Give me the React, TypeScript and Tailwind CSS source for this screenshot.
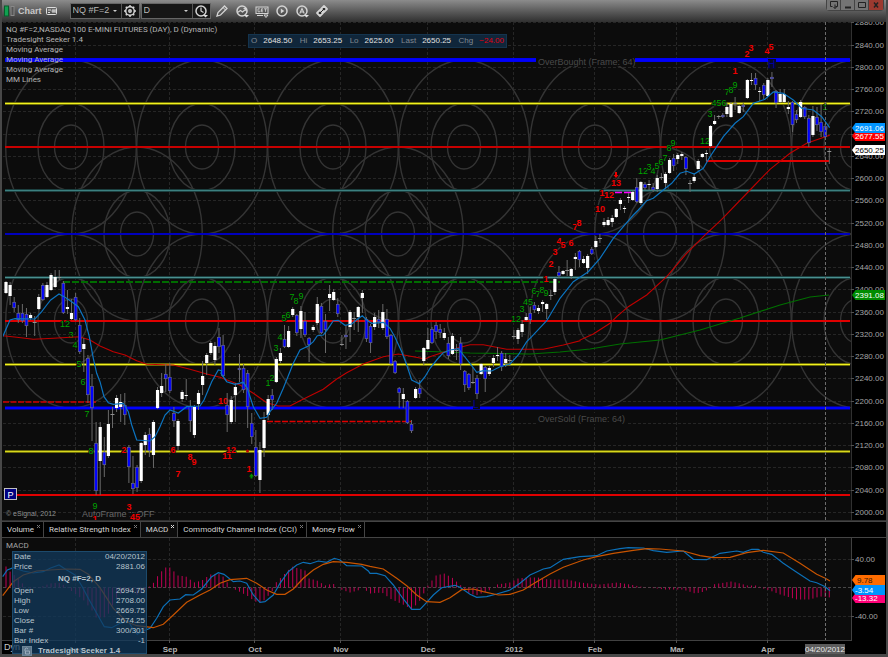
import { type ReactNode } from "react";

// One candle per entry: high, body top, body bottom, low, kind
// kind: 1 = up (white), 0 = down (blue), 2 = doji
const CANDLES: number[][] = `
281,282,293,294,1 282,285,296,305,1 297,302,308,312,0 305,313,320,323,0 304,313,321,323,0 308,314,326,337,0
313,315,318,320,1 316,322,323,336,2 294,297,309,310,1 283,285,300,301,0 282,285,297,298,1 273,275,290,291,1
270,277,287,288,1 270,277,278,280,2 281,283,313,314,0 290,307,309,314,1 299,313,319,320,1 293,297,320,321,0
318,325,352,354,0 338,344,349,372,1 355,358,395,403,0 374,386,408,441,0 422,443,491,495,0 422,427,461,495,1
437,452,465,477,0 410,424,456,458,1 407,414,415,428,2 395,398,408,412,1 394,402,407,422,1 393,405,415,425,0
445,447,467,483,0 456,483,489,494,0 465,467,488,492,0 442,443,481,483,1 432,435,445,455,1 428,434,451,457,0
420,422,455,468,1 387,390,408,409,1 373,386,393,397,1 364,374,379,392,0 363,377,391,393,0 407,413,421,427,0
419,421,446,450,1 390,392,399,402,1 379,395,396,400,1 400,406,421,432,0 405,407,435,438,1 390,393,404,410,1
361,376,385,395,1 353,355,363,375,1 341,343,353,355,1 342,346,360,365,1 328,337,347,353,0 335,345,376,377,0
393,405,415,432,0 396,400,422,424,1 383,387,395,422,1 354,368,370,382,0 364,368,390,393,0 370,373,407,428,0
413,423,437,444,0 430,447,476,477,0 442,450,480,493,1 412,420,448,457,1 395,399,415,420,1 389,395,400,410,0
357,359,382,383,1 348,353,361,363,1 325,339,347,348,0 326,331,347,348,1 307,309,315,317,1 314,315,333,336,0
306,311,329,338,1 312,321,335,337,0 337,338,345,362,0 325,327,330,332,1 297,304,323,325,1 303,306,333,334,0
314,321,330,353,0 285,294,298,311,1 289,292,300,301,1 298,304,314,317,0 335,344,345,346,2 325,335,337,349,0
310,312,327,342,1 312,318,319,330,2 306,307,317,332,1 290,293,298,313,1 317,319,339,342,0 324,326,343,353,0
313,317,327,330,1 310,319,322,328,0 304,312,328,330,1 309,319,337,339,0 334,335,364,365,0 360,361,373,374,0
387,388,393,408,0 388,394,399,408,1 400,401,423,424,0 420,424,431,433,0 387,389,398,399,1 380,388,394,398,0
347,348,361,365,1 328,340,349,350,1 327,329,343,344,0 322,325,332,339,0 324,329,333,338,0 328,333,338,340,1
337,343,356,359,0 333,336,354,355,1 344,350,351,360,2 337,343,364,370,0 370,371,385,392,0 373,374,388,390,0
367,382,383,384,2 375,378,394,399,0 363,364,374,375,1 366,367,379,392,0 366,368,374,376,1 355,358,363,367,1
347,355,356,361,1 351,353,367,371,0 353,359,363,367,1 355,360,361,366,2 330,336,337,339,2 328,330,339,344,1
320,324,332,337,1 313,317,320,321,1 307,313,320,324,0 302,305,310,313,0 305,308,311,314,1 300,302,304,312,1
303,304,309,319,1 290,295,296,300,2 278,279,292,295,1 266,272,276,278,0 270,271,274,275,1 260,270,271,276,2
268,269,276,279,1 253,257,259,270,1 250,251,260,267,0 256,259,263,264,1 254,256,268,274,1 247,249,254,255,0
236,241,247,248,1 234,238,239,243,2 218,222,225,227,1 217,220,225,226,1 215,218,222,227,1 208,209,217,218,1
198,200,204,210,1 206,208,209,213,1 193,197,198,203,1 191,192,200,201,1 178,187,202,203,0 181,182,203,205,1
182,184,188,190,0 180,184,185,190,1 183,187,190,192,0 175,178,189,192,1 173,177,178,180,2 172,174,183,189,1
158,160,173,174,1 154,158,166,171,0 153,155,159,164,1 152,154,156,160,1 156,157,169,175,0 180,183,184,192,2
173,177,181,183,1 159,161,169,169,1 153,154,157,158,1 150,153,154,161,1 125,126,146,147,1 115,121,124,125,1
115,116,117,119,2 113,115,117,118,0 103,107,114,117,1 102,104,117,118,1 97,103,104,110,2 105,106,113,114,1
103,105,107,112,0 79,80,98,99,1 73,80,81,85,1 73,78,85,90,0 87,91,92,101,1 83,85,95,99,0 78,80,96,97,1
72,77,79,87,0 90,91,103,108,0 89,94,102,103,1 89,94,102,103,1 101,107,109,114,1 101,102,125,132,0
110,114,120,123,0 100,102,117,118,1 106,107,117,119,0 115,118,143,147,0 106,116,135,137,1 107,117,125,131,0
104,122,132,137,0 124,126,137,138,0 148,151,152,164,2`
  .trim()
  .split(/\s+/)
  .map((c) => c.split(",").map(Number));

const barX = (i: number) => 6 + i * 4.096;

// Curve segments are stored as offsets from a local origin, in thirds of a chart unit
function seg(ox: number, oy: number, pts: string) {
  return pts
    .split(" ")
    .map((p) => {
      const [x, y] = p.split(",").map(Number);
      return `${(ox + x / 3).toFixed(1)},${(oy + y / 3).toFixed(1)}`;
    })
    .join(" ");
}

const FAST_MA = [
  seg(0, 240, "8,290 30,240 45,236 105,237 125,215 140,195 152,180 177,162 195,172 215,185 235,200 255,240 268,290 280,355 290,400 300,425 312,470 325,488 340,493 370,490 385,515 395,555 410,600 450,603 465,590 480,560 495,525 510,510 535,519 560,500 600,498 612,480 635,425 655,390 665,392"),
  seg(220, 260, "3,340 20,365 45,373 70,367 82,385 100,440 120,475 140,472 150,455 170,430 190,385 220,310 240,270 265,258 280,245 292,227 310,225 325,205 340,182 355,181 375,196 395,192 412,178 427,167 440,180 455,190 490,187 510,205 525,232 545,275 560,315 575,360 598,371 615,350"),
  seg(430, 240, "0,385 20,360 40,338 60,330 85,326 100,345 120,370 140,397 160,392 185,393 210,380 240,372 265,345 290,305"),
  seg(500, 130, "95,620 140,572 180,505 220,455 265,425 300,385 340,325 370,290 400,255 415,240 440,212 460,205 490,180 515,160 540,130 560,124 583,132 610,115"),
  seg(640, 0, "210,470 230,440 250,410 285,370 310,350 340,310 375,298 400,276 430,280 460,300 485,325 520,330 545,350 569,383"),
].join(" ");

const MID_MA = [
  seg(0, 240, "8,287 50,292 100,298 160,295 238,290 270,300 300,318 340,335 375,345 410,362 440,373 520,375 570,388 620,402"),
  seg(220, 260, "0,352 60,375 100,400 140,428 175,438 210,438 240,422 310,388 350,357 380,338 430,312 490,290 535,282 580,290 615,297"),
  seg(430, 240, "0,350 60,330 120,314 160,314 230,328 340,328 400,315 450,302"),
  seg(500, 130, "240,630 280,612 330,580 350,560 385,530 440,495 500,440 560,370 610,320"),
  seg(640, 0, "245,658 330,570 390,508 450,460 500,430 569,406"),
].join(" ");

const SLOW_MA =
  "415,351 445,352 470,353 530,354 560,352 590,349 620,344 660,340 700,330 740,318 780,305 810,297 829,295";

const MACD_LINE = [
  seg(0, 515, "8,185 22,165 40,158 70,168 100,174 130,170 150,160 177,150 200,165 225,180 245,212 265,250 290,295 313,335 335,338 360,325 385,318 400,345 412,358 425,350 450,340 470,310 490,275 510,255 540,252 557,239 580,240 605,222 635,185 655,173 672,178 700,200 720,198 740,205 760,240 780,262 795,260 820,240 840,205 865,170 890,150 910,142 930,146 955,138 980,142 1003,130 1020,135 1040,152 1085,153 1105,168"),
  seg(370, 515, "0,175 20,175 45,182 70,210 100,252 125,283 150,283 170,262 190,240 215,218 255,211 270,217 300,238 320,247 350,245 380,237 420,225 450,205 480,180 520,162 540,158 580,133 630,125 680,122 710,108 750,101 775,98 820,99 850,107 890,112 940,108 970,133 1010,134 1050,115 1100,108 1120,112 1145,103 1165,103 1180,112 1205,118 1240,145 1280,172 1320,198 1340,203 1366,215 1380,227"),
].join(" ");

const SIGNAL_LINE = [
  seg(0, 515, "8,242 40,200 70,180 110,168 150,165 200,162 240,163 265,178 300,218 340,280 380,320 410,332 460,338 490,328 520,300 560,262 600,240 630,225 660,205 690,194 740,190 770,205 800,225 830,238 855,238 880,222 910,190 940,165 970,148 1000,140 1040,142 1085,148"),
  seg(370, 515, "0,154 40,162 80,190 110,212 140,240 170,260 210,262 240,248 275,224 310,222 340,230 385,240 420,238 460,225 500,200 540,177 580,157 640,135 680,125 730,115 790,106 830,101 870,102 940,108 990,122 1030,128 1080,127 1130,113 1180,106 1240,114 1290,145 1340,178 1366,190 1380,198"),
].join(" ");

// Histogram knots: x, height. Bars in between are interpolated.
const HIST = [
  [6, 21], [10, 16], [18, 9], [26, 0], [30, -1], [42, 1], [50, 4], [58, 5], [63, 3], [68, -1], [75, -6],
  [84, -13], [92, -23], [96, -30], [104, -30], [108, -27], [116, -11], [124, -4], [132, -4], [138, -8],
  [146, -2], [153, 4], [158, 12], [165, 20], [170, 20], [178, 12], [186, 11], [194, 5], [202, 7], [210, 13],
  [218, 14], [223, 11], [231, 0], [239, -4], [247, -8], [255, -14], [260, -15], [264, -13], [272, -4],
  [276, 5], [284, 13], [292, 21], [305, 17], [309, 9], [317, 7], [325, 2], [333, 4], [341, -2], [350, -5],
  [358, -3], [362, 0], [370, -6], [382, -5], [390, -11], [403, -17], [412, -22], [420, -13], [428, 2],
  [436, 12], [444, 14], [452, 10], [461, 2], [468, -5], [476, -8], [489, -3], [497, 3], [510, 5], [518, 9],
  [526, 10], [538, 10], [548, 8], [567, 8], [580, 5], [600, 3], [617, 5], [630, 3], [640, 1], [647, 0],
  [665, -2], [683, -2], [695, -6], [705, -4], [709, -1], [713, 3], [731, 6], [740, 4], [747, 2], [757, 2],
  [763, -1], [770, -3], [780, -7], [797, -12], [810, -12], [820, -9], [830, -10],
];

function histAt(x: number) {
  const k = HIST.findIndex((h) => h[0] >= x);
  if (k <= 0) return k === 0 ? HIST[0][1] : HIST[HIST.length - 1][1];
  const [x0, h0] = HIST[k - 1];
  const [x1, h1] = HIST[k];
  return h0 + ((x - x0) / (x1 - x0)) * (h1 - h0);
}

type Mark = [number, number, string];

const GREEN_MARKS: Mark[] = [
  [65, 324, "12"], [71, 335, "3"], [75, 345, "4"], [79, 364, "5"], [83, 382, "6"], [87, 414, "7"],
  [91, 451, "8"], [95, 506, "9"], [268, 383, "1"], [272, 378, "2"], [276, 348, "3"], [280, 337, "4"],
  [284, 318, "5"], [288, 315, "6"], [292, 297, "7"], [296, 301, "8"], [301, 296, "9"], [516, 319, "12"],
  [522, 309, "3"], [528, 302, "45"], [534, 291, "6"], [538, 294, "7"], [542, 290, "8"], [546, 293, "9"],
  [643, 171, "12"], [649, 167, "3"], [653, 171, "4"], [657, 166, "5"], [661, 162, "6"], [665, 158, "7"],
  [669, 148, "8"], [673, 143, "9"], [705, 141, "12"], [710, 114, "3"], [719, 103, "456"], [727, 92, "7"],
  [731, 90, "8"], [735, 85, "9"], [825, 107, "1"],
];

const RED_MARKS: Mark[] = [
  [95, 519, "1"], [124, 450, "2"], [129, 507, "3"], [135, 517, "45"], [173, 450, "6"], [178, 474, "7"],
  [190, 457, "8"], [194, 462, "9"], [223, 401, "10"], [227, 456, "11"], [231, 450, "12"], [249, 469, "1"],
  [546, 279, "1"], [551, 264, "2"], [555, 252, "3"], [559, 241, "4"], [563, 245, "5"], [571, 243, "6"],
  [575, 227, "7"], [579, 223, "8"], [600, 209, "10"], [602, 193, "1"], [609, 195, "12"], [616, 183, "13"],
  [735, 71, "1"], [747, 54, "2"], [751, 48, "3"], [767, 51, "4"], [771, 47, "5"],
];

const MONTHS: [number, string][] = [
  [76, "Aug"], [170, "Sep"], [255, "Oct"], [341, "Nov"], [428, "Dec"], [514, "2012"], [595, "Feb"], [677, "Mar"], [768, "Apr"],
];

const PRICES = Array.from({ length: 23 }, (_, i) => 2880 - i * 40);
const priceY = (p: number) => 44.5 + ((2840 - p) / 40) * 22.26;

// Murrey Math levels: y, edge colour, core colour, edge width, core width
const LEVELS: [number, string, string, number, number][] = [
  [60, "#0000ee", "#0000ff", 4, 2],
  [103.5, "#6e6e08", "#f2f21e", 3, 1],
  [147, "#c40000", "#c80000", 2, 2],
  [190.5, "#1c4040", "#3c8080", 3, 1],
  [234, "#0000b0", "#0000cc", 2, 1],
  [277.5, "#1c4040", "#4a9090", 3, 1],
  [321, "#d80000", "#e00000", 2, 2],
  [364.5, "#6e6e08", "#f2f21e", 3, 1],
  [408, "#0000ee", "#0000ff", 3, 2],
  [451.5, "#6e6e08", "#d8d81c", 3, 1],
  [495, "#d80000", "#e00000", 2, 2],
];

const CIRCLES: [number, number][] = [
  ...[71, 202, 333, 464, 595, 726, 857].flatMap((x): [number, number][] => [[x, 147], [x, 321]]),
  [137, 234], [398, 234], [660, 234],
];

function Tag({ y, text, fill, color = "#fff" }: { y: number; text: string; fill: string; color?: string }) {
  return (
    <g>
      <path d={`M852 ${y}l3.5-5H885v10H855.500z`} fill={fill} />
      <text x="855" y={y + 3} fill={color}>{text}</text>
    </g>
  );
}

function PriceChart() {
  return (
    <svg viewBox="2 22 884 499" className="block h-auto w-full text-[8px]" role="img" aria-label="NQ #F=2 daily price chart">
      <rect x="2" y="22" width="884" height="499" fill="#000" />
      <rect x="2" y="22" width="849" height="498" fill="#0c0c0c" />
      <clipPath id="plot"><rect x="3" y="22" width="848" height="498" /></clipPath>
      <g stroke="#262626" strokeDasharray="3 2">
        {MONTHS.map(([x]) => <path key={x} d={`M${x - 0.5} 22V520`} />)}
        {PRICES.map((p) => <path key={p} d={`M3 ${Math.round(priceY(p)) + 0.5}H851`} />)}
      </g>
      <g clipPath="url(#plot)">
        <g fill="none" stroke="#343434" strokeWidth="1.4">
          {CIRCLES.map(([x, y]) => (
            <g key={`${x}-${y}`}>
              <ellipse cx={x} cy={y} rx="65.300" ry="87" />
              <ellipse cx={x} cy={y} rx="33" ry="43.500" />
              <ellipse cx={x} cy={y} rx="16.500" ry="22" />
            </g>
          ))}
        </g>
        {LEVELS.map(([y, edge, core, w, cw]) => (
          <g key={y}>
            <path d={`M5 ${y}H850`} stroke={edge} strokeWidth={w} />
            <path d={`M5 ${y}H850`} stroke={core} strokeWidth={cw} />
          </g>
        ))}
        <path d="M3 402H96" stroke="#d00000" strokeWidth="1.6" strokeDasharray="6 1.500" />
        <path d="M267 421.500H412" stroke="#e00000" strokeWidth="1.6" strokeDasharray="6 1.500" />
        <path d="M63 282H560" stroke="#006c00" strokeWidth="2" strokeDasharray="7 2" />
        <path d="M615 192.500H634" stroke="#ff00ff" strokeWidth="1.5" strokeDasharray="7 2" />
        <path d="M706 161H829" stroke="#e00000" strokeWidth="2" />

        <g fill="#4a4a4a" className="text-[9px]">
          <rect x="536" y="56" width="99" height="10" fill="#0c0c0c" />
          <text x="538" y="65">OverBought (Frame: 64)</text>
          <rect x="536" y="413" width="90" height="11" fill="#0c0c0c" />
          <text x="538" y="422">OverSold (Frame: 64)</text>
        </g>
        <text x="82" y="517" fill="#686868" className="text-[9px]">AutoFrame :: OFF</text>
        <rect x="768" y="59" width="8" height="10" fill="#080828" />
        <text x="768" y="68" fill="#0000a0" className="text-[10px]">H</text>
        <rect x="473" y="400" width="7" height="9" fill="#0c0c0c" />
        <text x="473" y="408" fill="#0000a0" className="text-[10px]">L</text>

        <g className="text-[9px]" textAnchor="middle" paintOrder="stroke" stroke="#0c0c0c" strokeWidth="1.500">
          <g fill="#00a400">
            {GREEN_MARKS.map(([x, y, t]) => <text key={`${x}${t}`} x={x} y={y + 3}>{t}</text>)}
          </g>
          <g fill="#ee0000" className="font-bold">
            {RED_MARKS.map(([x, y, t]) => <text key={`${x}${t}`} x={x} y={y + 3}>{t}</text>)}
          </g>
        </g>
        <path d="M616 178l-2.500-3h1.500v-3h2v3h1.500z" fill="#ee0000" />
        <path d="M251.500 473.500l2.500 3h-1.500v2h-2v-2h-1.500z" fill="#009000" />
        <circle cx="247.500" cy="451" r="1.500" fill="#c00000" />

        <g fill="none" strokeWidth="1.100">
          <polyline points={SLOW_MA} stroke="#007000" />
          <polyline points={MID_MA} stroke="#c00000" />
        </g>
        {CANDLES.map(([hi, top, bottom, lo, kind], i) => {
          const x = barX(i);
          return (
            <g key={i}>
              <path d={`M${x} ${hi}V${lo}`} stroke="#6a6a6a" strokeWidth="1" />
              {kind === 2 && <path d={`M${x - 2} ${top + 0.5}h4`} stroke="#909090" />}
              {kind === 1 && <rect x={x - 1.6} y={top} width="3.200" height={bottom - top} fill="#fff" />}
              {kind === 0 && (
                <rect x={x - 1.4} y={top + 0.3} width="2.800" height={bottom - top - 0.6} fill="#0000ff" stroke="#66668c" strokeWidth="0.700" />
              )}
            </g>
          );
        })}
        <polyline points={FAST_MA} fill="none" stroke="#0c74c0" strokeWidth="1.200" />
        <path d="M825.500 22V520" stroke="#6c6c6c" strokeDasharray="3 2" />
      </g>

      <path d="M851.500 22V520" stroke="#303030" />
      <path d="M2 520.500H886" stroke="#303030" />
      {PRICES.map((p) => (
        <g key={p}>
          <path d={`M851 ${Math.round(priceY(p)) + 0.5}h3`} stroke="#505050" />
          {p !== 2680 && <text x="855" y={Math.round(priceY(p)) + 3} fill="#a4a4a4">{p.toFixed(2)}</text>}
        </g>
      ))}
      <Tag y={136} text="2677.55" fill="#ff0000" />
      <Tag y={128} text="2691.06" fill="#0094ff" />
      <Tag y={150} text="2650.25" fill="#fff" color="#000" />
      <Tag y={295} text="2391.08" fill="#008c00" />
    </svg>
  );
}

function MacdChart() {
  return (
    <svg viewBox="2 538 884 116" className="block h-auto w-full text-[8px]" role="img" aria-label="MACD chart">
      <rect x="2" y="538" width="884" height="116" fill="#000" />
      <rect x="2" y="538" width="849" height="102" fill="#0c0c0c" />
      <g stroke="#262626" strokeDasharray="3 2">
        {MONTHS.map(([x]) => <path key={x} d={`M${x - 0.5} 538V640`} />)}
        <path d="M3 559.500H851M3 616.500H851" />
        <path d="M3 587.500H851" stroke="#484848" />
      </g>
      {CANDLES.map((_, i) => {
        const h = histAt(barX(i));
        return <path key={i} d={`M${barX(i)} 587.500v${(-h).toFixed(1)}`} stroke="#c00054" />;
      })}
      <g fill="none" strokeWidth="1.200">
        <polyline points={MACD_LINE} stroke="#0c70b8" />
        <polyline points={SIGNAL_LINE} stroke="#c85400" />
      </g>
      <path d="M825.500 538V640" stroke="#707070" strokeDasharray="3 2" />
      <path d="M851.500 538V640M2 640.500H852" stroke="#404040" />
      <g stroke="#505050">
        {MONTHS.map(([x]) => <path key={x} d={`M${x - 0.5} 640v3`} />)}
        <path d="M851 559.500h3M851 616.500h3" />
      </g>
      <g fill="#a4a4a4">
        <text x="855" y="562">40.00</text>
        <text x="855" y="619">-40.00</text>
      </g>
      <Tag y={598} text="-13.32" fill="#ff0078" />
      <Tag y={590} text="-3.54" fill="#0094ff" />
      <g transform="translate(2 0)">
        <path d="M850 580l3.500-5H883v10h-29.500z" fill="#ff6c00" />
        <text x="855" y="583" fill="#3a1800">9.78</text>
      </g>
      <text x="4" y="650" fill="#c8c8c8" className="text-[9px]">Dyn</text>
      <g fill="#b4b4b4" textAnchor="middle" className="font-bold">
        {MONTHS.map(([x, m]) => <text key={m} x={x} y="652">{m}</text>)}
      </g>
      <rect x="805" y="644" width="40" height="10" fill="#5c5c5c" />
      <text x="825" y="652" fill="#e8e8e8" textAnchor="middle">04/20/2012</text>
    </svg>
  );
}

function ToolButton({ label, children, className = "" }: { label: string; children: ReactNode; className?: string }) {
  return (
    <button type="button" aria-label={label} className={`grid h-3.5 w-3.5 place-items-center ${className}`}>
      <svg viewBox="0 0 14 14" className="h-3.5 w-3.5" fill="none" stroke="#d4d4d4" strokeWidth="1.500">{children}</svg>
    </button>
  );
}

function Picker({ label, value }: { label: string; value: string }) {
  return (
    <span className="relative flex h-full w-[50px] items-center">
      <select aria-label={label} defaultValue={value} className="h-full w-full appearance-none bg-transparent pl-0.5 text-[9px] text-[#b8b8b8] outline-none">
        <option>{value}</option>
      </select>
      <svg viewBox="0 0 4 2" className="pointer-events-none absolute right-1 h-0.5 w-1"><path d="M0 0h4L2 2z" fill="#ccc" /></svg>
    </span>
  );
}

function TitleBar() {
  return (
    <header className="flex h-[22px] items-start justify-between bg-linear-to-b from-[#8c8c8c] via-[#5c5c5c] to-[#303030]">
      <div className="flex h-full items-center">
        <svg viewBox="0 0 14 12" className="ml-0.5 h-3 w-3.5">
          <rect x="0.500" y="1" width="4" height="10" fill="#10a050" stroke="#085c2c" />
          <rect x="7" y="1.500" width="3" height="9" fill="#555" stroke="#888" />
        </svg>
        <h1 className="text-[9px] leading-3 font-bold text-[#c8c8c8]">Chart</h1>
        <svg viewBox="0 0 12 8" className="ml-1 h-2 w-3" fill="none" stroke="#ddd">
          <rect x="0.500" y="0.500" width="10" height="7" rx="1" />
          <path d="M2 3h3M2 5.500h2M7 2v4M5.500 4h4M9 2v4" />
        </svg>
        <div className="ml-3 flex h-4 items-center border border-[#666] bg-[#161616]">
          <Picker label="Symbol" value="NQ #F=2" />
          <ToolButton label="Symbol settings" className="w-[18px] border-l border-[#555]">
            <circle cx="7" cy="7" r="4.300" />
            <circle cx="7" cy="7" r="1.200" />
            <path d="M7 1v2M7 11v2M1 7h2M11 7h2M2.800 2.800l1.300 1.300M9.900 9.900l1.300 1.300M11.200 2.800L9.900 4.100M4.100 9.900l-1.300 1.300" />
          </ToolButton>
        </div>
        <div className="ml-px flex h-4 items-center border border-[#666] bg-[#161616]">
          <Picker label="Interval" value="D" />
          <ToolButton label="Time template" className="w-[18px] border-l border-[#555]">
            <circle cx="7" cy="7" r="5" />
            <path d="M7 3.500V7l2.500 1.500" strokeWidth="1.200" />
            <path d="M9 11h5l-2.500 2.500z" fill="#ddd" stroke="none" />
          </ToolButton>
        </div>
        <nav className="ml-1 flex gap-[6px]">
          <ToolButton label="Draw">
            <path d="M2 12l1-3.500L9.500 2l2.500 2.500L5.500 11z" strokeWidth="1.300" />
            <path d="M8 3.500L10.500 6" strokeWidth="1" />
          </ToolButton>
          <ToolButton label="Studies">
            <circle cx="7" cy="7" r="5" />
            <path d="M2.500 8.500l3-2 2 1.500 3.500-3M8.500 4.500H11V7" strokeWidth="1.200" />
            <path d="M9 11h5l-2.500 2.500z" fill="#ddd" stroke="none" />
          </ToolButton>
          <ToolButton label="GET studies">
            <rect x="1" y="3" width="12" height="6.500" strokeWidth="1" />
            <path d="M4.800 4.800H3v3h2V6.500M8 4.800H6.500v3H8M6.500 6.200H8M9 4.800h3M10.500 4.800v3" strokeWidth="0.800" />
            <path d="M2 11.500h6M9 11h4l-2 2.500z" strokeWidth="1" />
          </ToolButton>
          <ToolButton label="Replay">
            <circle cx="7" cy="7" r="5" />
            <path d="M5.800 4.500L9.300 7 5.800 9.500z" fill="#d4d4d4" stroke="none" />
          </ToolButton>
          <ToolButton label="Auto scale">
            <circle cx="7" cy="7" r="5" />
            <path d="M4.800 9.500L7 4.500l2.200 5M5.600 8h2.800" strokeWidth="1.100" />
            <path d="M9 11h5l-2.500 2.500z" fill="#ddd" stroke="none" />
          </ToolButton>
          <ToolButton label="Link">
            <path d="M2 9l3-3 3 3-3 3zM6 5l3-3 3 3-3 3z" strokeWidth="1.800" strokeLinejoin="round" fill="#222" />
            <path d="M5 9l4-4" strokeWidth="1" stroke="#222" />
          </ToolButton>
        </nav>
      </div>
      <div className="mr-0.5 flex h-[11px] divide-x divide-[#444] rounded-b border border-t-0 border-[#444]">
        <WindowButton label="Pop out"><path d="M1.500 1.500h7v5h-2M1.500 1.500v5h2M6 4.500v4M4.500 7L6 8.500 7.500 7" /></WindowButton>
        <WindowButton label="Minimize"><path d="M2 7.500h6" strokeWidth="2" /></WindowButton>
        <WindowButton label="Maximize"><path d="M1.500 2.500h7v5h-7z" /></WindowButton>
        <WindowButton label="Close" className="bg-[#9c3a30]"><path d="M3 2.500l4 5M7 2.500l-4 5" strokeWidth="1.500" /></WindowButton>
      </div>
    </header>
  );
}

function WindowButton({ label, children, className = "bg-[#747474]" }: { label: string; children: ReactNode; className?: string }) {
  return (
    <button type="button" aria-label={label} className={`grid w-3.5 place-items-center ${className}`}>
      <svg viewBox="0 0 10 10" className="h-2.5 w-2.5" fill="none" stroke="#222">{children}</svg>
    </button>
  );
}

const QUOTE = [["O", "2648.50"], ["Hi", "2653.25"], ["Lo", "2625.00"], ["Last", "2650.25"], ["Chg", "−24.00"]];

const TABS = ["Volume", "Relative Strength Index", "MACD", "Commodity Channel Index (CCI)", "Money Flow"];

function StudyTabs() {
  return (
    <div role="tablist" className="flex h-[17px] border-y border-[#444] bg-black font-[Roboto,sans-serif]">
      {TABS.map((t) => (
        <div key={t} className={`flex border-r border-[#444] pr-0.5 pl-[5px] ${t === "MACD" ? "bg-[#0c0c0c]" : ""}`}>
          <button type="button" role="tab" aria-selected={t === "MACD"} className="text-[8px] text-[#d4d4d4]">{t}</button>
          <button type="button" aria-label={`Close ${t}`} className="ml-0.5 self-start pt-0.5">
            <svg viewBox="0 0 5 5" className="h-[5px] w-[5px]"><path d="M1 1l3 3M4 1L1 4" stroke={t === "MACD" ? "#ddd" : "#777"} /></svg>
          </button>
        </div>
      ))}
    </div>
  );
}

const BAR_ROWS = [["Open", "2694.75"], ["High", "2708.00"], ["Low", "2669.75"], ["Close", "2674.25"], ["Bar #", "300/301"], ["Bar Index", "-1"]];

function Row({ k, v }: { k: string; v: string }) {
  return (
    <div className="flex justify-between">
      <dt>{k}</dt>
      <dd>{v}</dd>
    </div>
  );
}

function CursorWindow() {
  return (
    <aside className="absolute top-[13px] left-[10px] h-[103px] w-[135px] border border-[#1c4a6c] bg-[#123a5c]/75 px-px text-[8px] leading-[10px] text-[#b8c4cc]">
      <dl>
        <Row k="Date" v="04/20/2012" />
        <Row k="Price" v="2881.06" />
      </dl>
      <h2 className="py-0.5 text-center font-bold">NQ #F=2, D</h2>
      <dl>
        {BAR_ROWS.map(([k, v]) => <Row key={k} k={k} v={v} />)}
      </dl>
      <div className="flex items-center gap-1.5 pl-2 font-bold">
        <svg viewBox="0 0 10 10" className="h-2.5 w-2.5" fill="none" stroke="#9ab">
          <rect x="0.500" y="0.500" width="9" height="9" fill="#5a7488" stroke="#6c8496" />
          <path d="M3 5V3q1.500-2 3 0M3.500 5h4v3h-4z" />
        </svg>
        Tradesight Seeker 1.4
      </div>
    </aside>
  );
}

export default function App() {
  return (
    <main className="min-h-screen bg-[#484848] px-0.5 font-['Liberation_Sans',Arial,sans-serif]">
      <TitleBar />
      <section className="relative">
        <PriceChart />
        <ul className="absolute top-[3px] left-1 font-[Roboto,sans-serif] text-[8px] leading-[10px] text-[#b4b4b4]">
          <li>NQ #F=2,NASDAQ 100 E-MINI FUTURES (DAY), D (Dynamic)</li>
          <li>Tradesight Seeker 1.4</li>
          <li>Moving Average</li>
          <li>Moving Average</li>
          <li>Moving Average</li>
          <li>MM Lines</li>
        </ul>
        <dl className="absolute top-3 left-[246px] flex h-3.5 w-[259px] items-center justify-between border border-[#14344e] bg-[#10263a] px-0.5 text-[8px]">
          {QUOTE.map(([k, v]) => (
            <div key={k} className="flex gap-1.5">
              <dt className="text-[#808890]">{k}</dt>
              <dd className={k === "Chg" ? "text-[#e00010]" : "text-[#e0e0e0]"}>{v}</dd>
            </div>
          ))}
        </dl>
        <button type="button" className="absolute bottom-[21px] left-0.5 grid h-3 w-[13px] place-items-center border border-[#c0c0c0] bg-[#000080] text-[9px] text-white">P</button>
        <small className="absolute bottom-[3px] left-1 text-[7px] leading-[8px] text-[#909090]">© eSignal, 2012</small>
      </section>
      <StudyTabs />
      <section className="relative">
        <MacdChart />
        <p className="absolute top-[3px] left-1 font-[Roboto,sans-serif] text-[8px] leading-[10px] text-[#a4a4a4]">MACD</p>
        <CursorWindow />
      </section>
    </main>
  );
}
